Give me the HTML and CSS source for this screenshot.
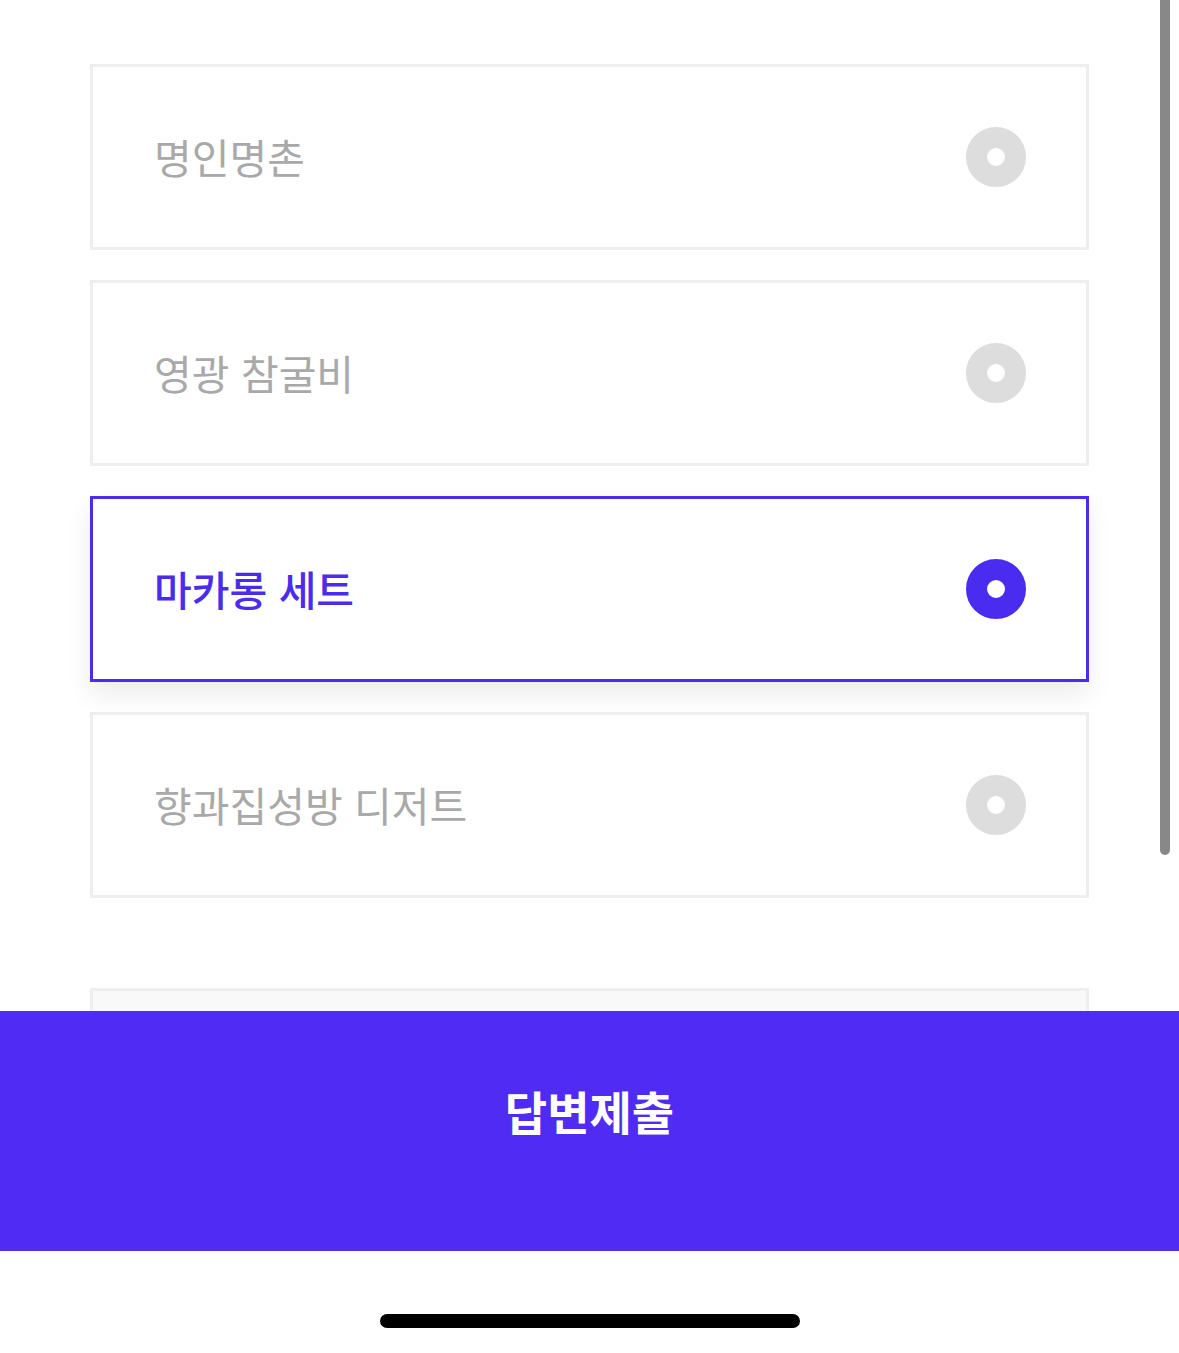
FILE: index.html
```html
<!DOCTYPE html>
<html lang="ko">
<head>
    <meta charset="UTF-8">
    <meta name="viewport" content="width=device-width, initial-scale=1.0">
    <title>답변제출</title>
    <link rel="stylesheet" href="styles.css">
</head>
<body>
    <div class="screen">
        <div class="options">
            <label class="option">
                <span class="option-name">명인명촌</span>
                <span class="radio"></span>
            </label>
            <label class="option">
                <span class="option-name">영광 참굴비</span>
                <span class="radio"></span>
            </label>
            <label class="option selected">
                <span class="option-name">마카롱 세트</span>
                <span class="radio"></span>
            </label>
            <label class="option">
                <span class="option-name">향과집성방 디저트</span>
                <span class="radio"></span>
            </label>
            <label class="option faded">
                <span class="option-name"></span>
                <span class="radio"></span>
            </label>
        </div>

        <div class="scrollbar"></div>

        <div class="footer">
            <button class="submit-btn" type="button">답변제출</button>
            <div class="home-area">
                <div class="home-indicator"></div>
            </div>
        </div>
    </div>
</body>
</html>
```

FILE: styles.css
```css
body {
    margin: 0;
    font-family: "Noto Sans CJK KR", "Noto Sans", sans-serif;
    background-color: white;
}
.screen {
    position: relative;
    width: 1179px;
    height: 1353px;
    overflow: hidden;
}
.options {
    display: flex;
    flex-direction: column;
    gap: 30px;
    padding: 64px 90px 0 90px;
}
.option {
    display: flex;
    justify-content: space-between;
    align-items: center;
    box-sizing: border-box;
    height: 186px;
    padding: 0 60px 0 61px;
    border: 3px solid #eeeeee;
    background-color: white;
    cursor: pointer;
}
.option-name {
    font-size: 41px;
    letter-spacing: 0;
    color: #a9a9a9;
    margin-top: -2px;
}
.radio {
    box-sizing: border-box;
    width: 60px;
    height: 60px;
    border-radius: 50%;
    border: 21px solid #dddddd;
    background-color: white;
}
.option.selected {
    border-color: #4a2cf0;
    box-shadow: 0 12px 24px rgba(0, 0, 0, 0.08);
}
.option.selected .option-name {
    color: #4a2cf0;
    font-weight: 500;
}
.option.selected .radio {
    border-color: #4a2cf0;
}
.option.faded {
    margin-top: 60px;
    background-color: #f9f9f9;
}
.scrollbar {
    position: absolute;
    top: 0;
    right: 9px;
    width: 10px;
    height: 855px;
    background-color: #888888;
    border-radius: 0 0 5px 5px;
}
.footer {
    position: absolute;
    left: 0;
    right: 0;
    top: 1011px;
    bottom: 0;
    display: flex;
    flex-direction: column;
    background-color: white;
}
.submit-btn {
    height: 240px;
    padding: 0 0 42px 0;
    border: none;
    background-color: #4f2bf3;
    color: white;
    font-family: "Noto Sans CJK KR", sans-serif;
    font-size: 46px;
    font-weight: 700;
    letter-spacing: 0;
    cursor: pointer;
}
.home-area {
    flex: 1;
    display: flex;
    justify-content: center;
    padding-top: 63px;
}
.home-indicator {
    width: 420px;
    height: 14px;
    border-radius: 7px;
    background-color: black;
}
```
